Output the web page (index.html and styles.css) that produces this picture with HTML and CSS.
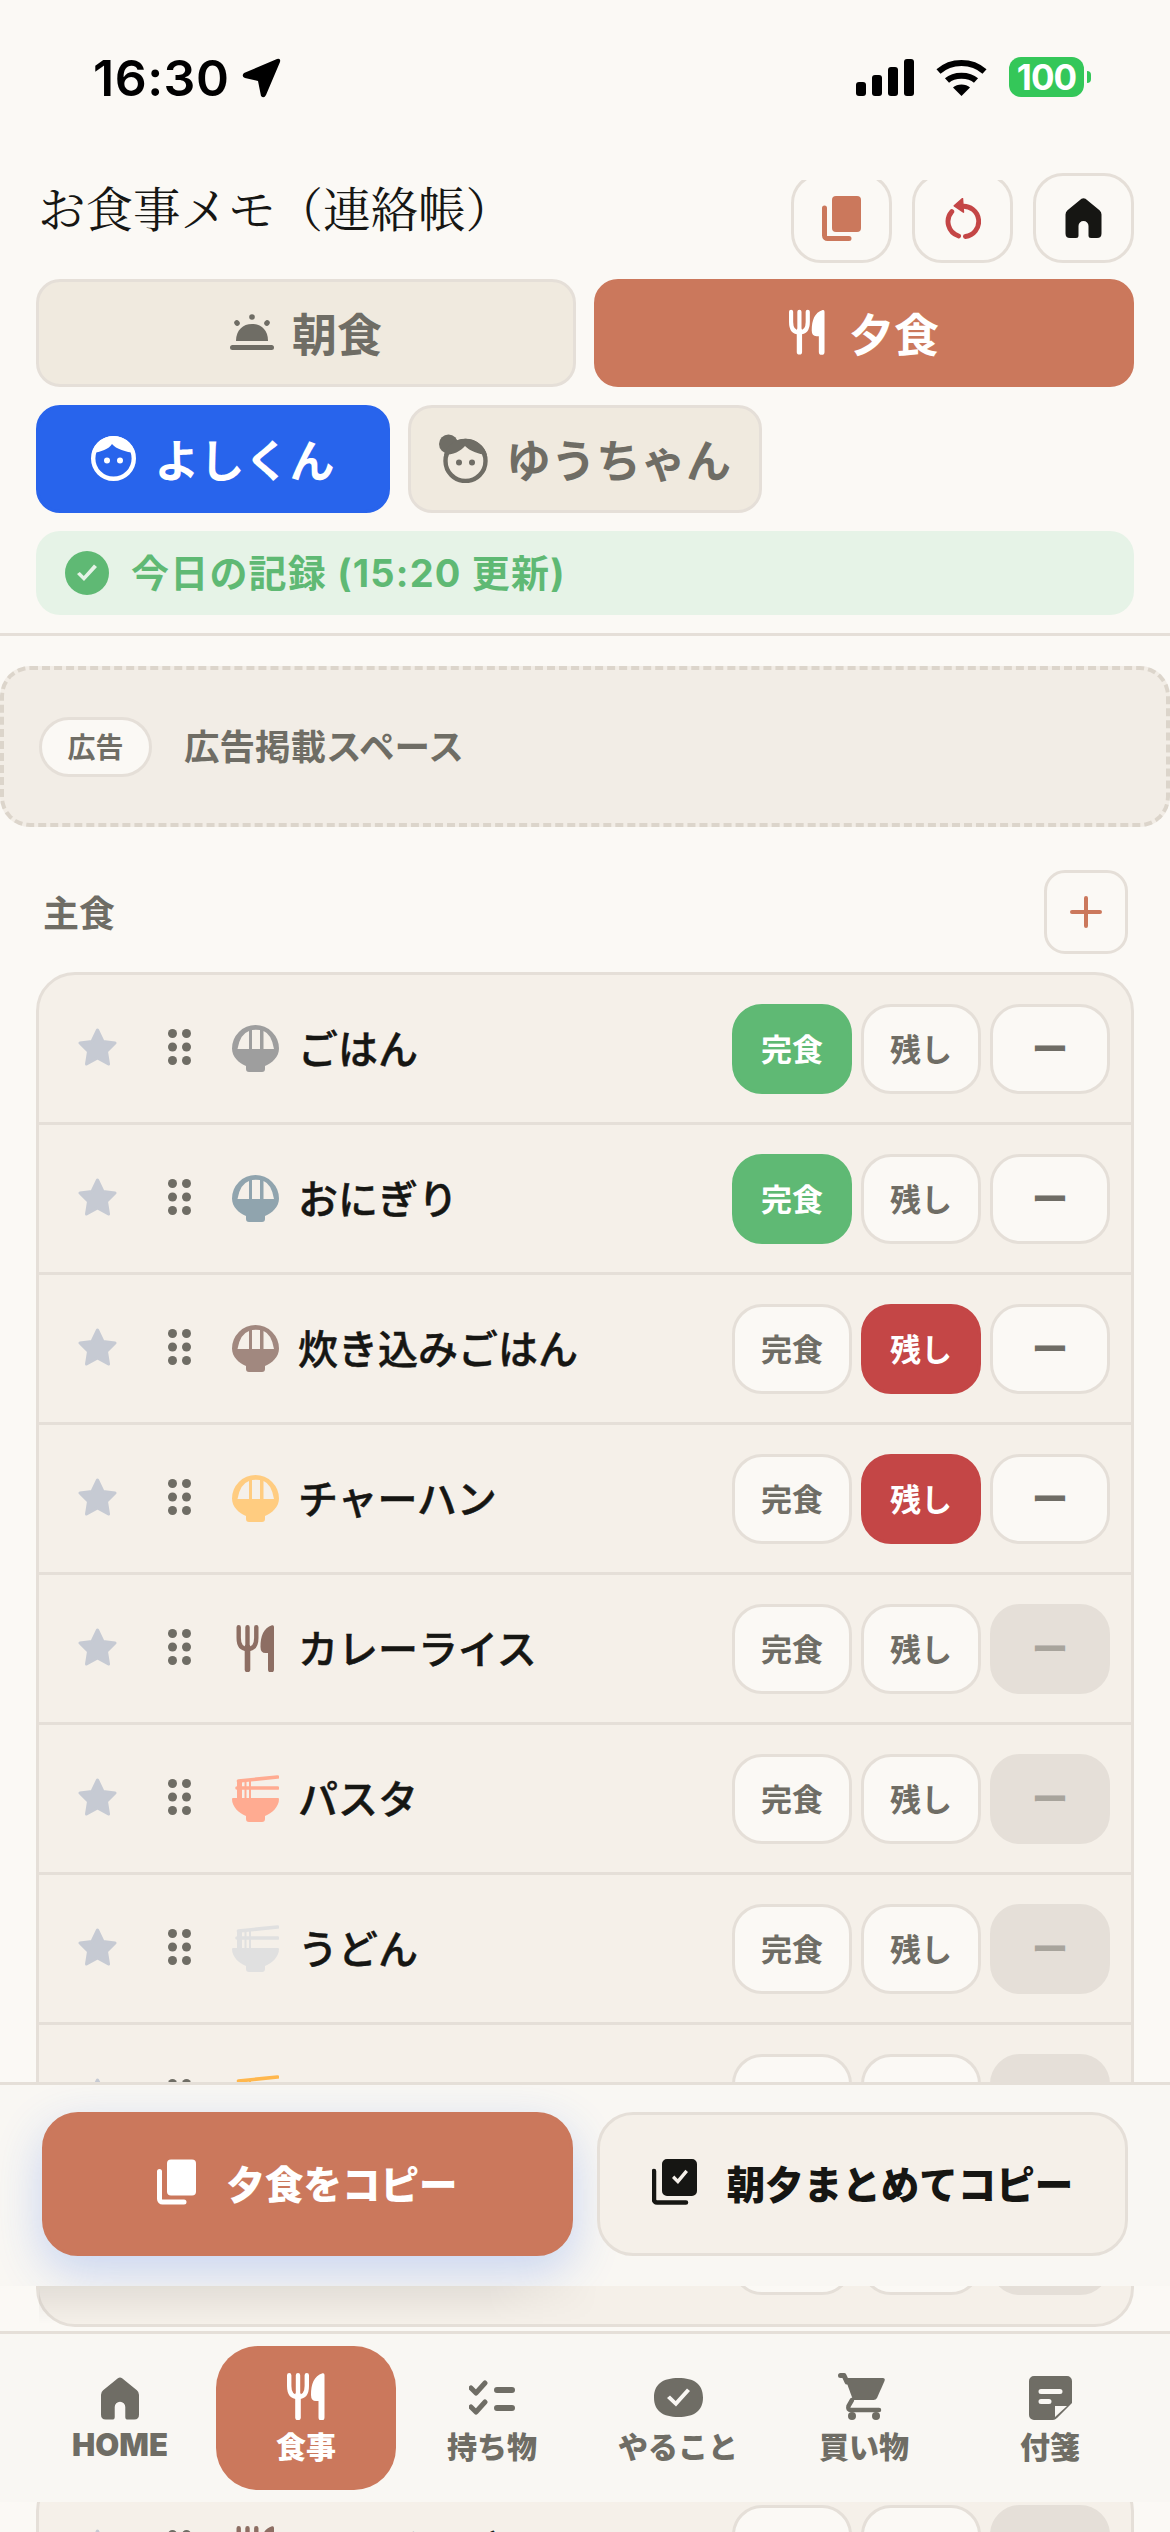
FILE: index.html
```html
<!DOCTYPE html>
<html lang="ja">
<head>
    <meta charset="UTF-8">
    <meta name="viewport" content="width=device-width, initial-scale=1.0">
    <title>お食事メモ</title>
    <link rel="stylesheet" href="styles.css">
</head>
<body>
    <svg class="sprite" xmlns="http://www.w3.org/2000/svg">
        <symbol id="ic-copy" viewBox="0 0 39 45">
            <rect x="10" y="0" width="29" height="36" rx="4" fill="currentColor"/>
            <path d="M2.5 12V39.5a3 3 0 0 0 3 3H27" fill="none" stroke="currentColor" stroke-width="5" stroke-linecap="round"/>
        </symbol>
        <symbol id="ic-copy-check" viewBox="0 0 45 46">
            <path fill-rule="evenodd" fill="currentColor" d="M15 0H40a5 5 0 0 1 5 5V32a5 5 0 0 1-5 5H15a5 5 0 0 1-5-5V5a5 5 0 0 1 5-5ZM20 19l6 6 10-12-2.6-2.2L25.700 20l-3.400-3.400Z"/>
            <path d="M2 12V40.500a3 3 0 0 0 3 3H34" fill="none" stroke="currentColor" stroke-width="4.500" stroke-linecap="round"/>
        </symbol>
        <symbol id="ic-reload" viewBox="0 0 38 42">
            <path d="M15 39A15.500 15.500 0 0 1 8 14" fill="none" stroke="currentColor" stroke-width="5" stroke-linecap="round"/>
            <path d="M22 39.500A15.500 15.500 0 0 0 18 8.500" fill="none" stroke="currentColor" stroke-width="5" stroke-linecap="round"/>
            <path d="M19 0.500 10.500 8 20 14.500Z" fill="currentColor" stroke="currentColor" stroke-width="1.500" stroke-linejoin="round"/>
        </symbol>
        <symbol id="ic-home" viewBox="0 0 36 40">
            <path fill="currentColor" d="M16 .8 2 12.300Q0 14 0 16.500V35.500Q0 40 4.500 40H10.500Q13 40 13 37.500V28a5 5 0 0 1 10 0V37.500Q23 40 25.500 40H31.500Q36 40 36 35.500V16.500Q36 14 34 12.300L20 .8Q18 -.5 16 .8Z"/>
        </symbol>
        <symbol id="ic-utensils" viewBox="0 0 38 47">
            <path d="M2.200 2.200V13Q2.200 24 11 24Q19.800 24 19.800 13V2.200M11 2.200V24" fill="none" stroke="currentColor" stroke-width="4.400" stroke-linecap="round"/>
            <path d="M11 22V44.500" fill="none" stroke="currentColor" stroke-width="5.600" stroke-linecap="round"/>
            <path fill="currentColor" d="M35.500 .3C27 3 24 11 24 22Q24 28 29 28H31.500V44.500a3 3 0 0 0 6 0V2Q37.500 -.2 35.500 .3Z"/>
        </symbol>
        <symbol id="ic-cloche" viewBox="0 0 44 36">
            <circle cx="22" cy="3" r="2.800" fill="currentColor"/>
            <ellipse cx="7" cy="9" rx="2.600" ry="3" transform="rotate(-40 7 9)" fill="currentColor"/>
            <ellipse cx="37" cy="9" rx="2.600" ry="3" transform="rotate(40 37 9)" fill="currentColor"/>
            <path fill="currentColor" d="M6 27C6 16 13 10 22 10S38 16 38 27Z"/>
            <rect x="0" y="31" width="44" height="5" rx="2.500" fill="currentColor"/>
        </symbol>
        <symbol id="ic-boy" viewBox="0 0 45 45">
            <circle cx="22.500" cy="22.500" r="20.300" fill="none" stroke="currentColor" stroke-width="4.400"/>
            <path fill="currentColor" d="M22.500 0A22.500 22.500 0 0 1 44 17C35 16 25 13 21 8C18 13 10 16 1 17A22.500 22.500 0 0 1 22.500 0Z"/>
            <circle cx="16" cy="24.500" r="3" fill="currentColor"/>
            <circle cx="29" cy="24.500" r="3" fill="currentColor"/>
        </symbol>
        <symbol id="ic-girl" viewBox="0 0 49 49">
            <circle cx="9.500" cy="10" r="9.500" fill="currentColor"/>
            <circle cx="26.500" cy="27" r="20" fill="none" stroke="currentColor" stroke-width="4.400"/>
            <path fill="currentColor" d="M26.500 4.800A22.200 22.200 0 0 1 48 21C39 20 31 17 26 12C22 17 14 21 5 21A22.200 22.200 0 0 1 26.500 4.800Z"/>
            <circle cx="20" cy="28.500" r="3" fill="currentColor"/>
            <circle cx="33" cy="28.500" r="3" fill="currentColor"/>
        </symbol>
        <symbol id="ic-star" viewBox="0 0 39 38">
            <path fill="currentColor" stroke="currentColor" stroke-width="3" stroke-linejoin="round" d="M19.500 2 25 13.500 37 15 28.500 23.500 30.500 36 19.500 30 8.500 36 10.500 23.500 2 15 14 13.500Z"/>
        </symbol>
        <symbol id="ic-drag" viewBox="0 0 23 36">
            <circle cx="4.500" cy="4.500" r="4.500" fill="currentColor"/>
            <circle cx="18.500" cy="4.500" r="4.500" fill="currentColor"/>
            <circle cx="4.500" cy="18" r="4.500" fill="currentColor"/>
            <circle cx="18.500" cy="18" r="4.500" fill="currentColor"/>
            <circle cx="4.500" cy="31.500" r="4.500" fill="currentColor"/>
            <circle cx="18.500" cy="31.500" r="4.500" fill="currentColor"/>
        </symbol>
        <symbol id="ic-bowl" viewBox="0 0 47 47">
            <path fill-rule="evenodd" fill="currentColor" d="M23.500 0A23.500 23.500 0 0 0 0 23.500C0 32 7 38 14 41V44a3 3 0 0 0 3 3H30a3 3 0 0 0 3-3V41C40 38 47 32 47 23.500A23.500 23.500 0 0 0 23.500 0ZM5.500 24H17V6Q8 9 5.500 24ZM20 24H28V5Q24 4.500 20 5ZM31.500 24H42Q39.500 9 31.500 6Z"/>
        </symbol>
        <symbol id="ic-noodle" viewBox="0 0 47 47">
            <path fill="currentColor" d="M1 23H46Q47 23 47 24C47 32 40 38 33 41V44a3 3 0 0 1-3 3H17a3 3 0 0 1-3-3V41C7 38 0 32 0 24Q0 23 1 23Z"/>
            <path d="M6.500 6 45.500 2M5 13H45.500" fill="none" stroke="currentColor" stroke-width="3.600" stroke-linecap="round"/>
            <path fill="currentColor" d="M5 6H10V24H5ZM12.500 6H14.500V24H12.500ZM17 6H19V24H17Z"/>
        </symbol>
        <symbol id="ic-checklist" viewBox="0 0 46 35">
            <path d="M2 8 7 13 16 3M2 27 7 32 16 22" fill="none" stroke="currentColor" stroke-width="5" stroke-linecap="round" stroke-linejoin="round"/>
            <path d="M28 10H43M28 28H43" fill="none" stroke="currentColor" stroke-width="6" stroke-linecap="round"/>
        </symbol>
        <symbol id="ic-todo" viewBox="0 0 49 39">
            <path fill-rule="evenodd" fill="currentColor" d="M24.500 0C40 0 49 6 49 19.500S40 39 24.500 39 0 33 0 19.500 9 0 24.500 0ZM13 20l9 8.500L36 13l-3-2.500L21.700 23l-5.700-5.500Z"/>
        </symbol>
        <symbol id="ic-cart" viewBox="0 0 47 47">
            <path d="M2.500 2.500H6L9 9" fill="none" stroke="currentColor" stroke-width="5" stroke-linecap="round" stroke-linejoin="round"/>
            <path fill="currentColor" d="M7 5H45Q47.500 5 46.500 8L39 25Q38 27 35.500 27H15Z"/>
            <path d="M14 27 10.500 33Q9.500 37 13 37H41" fill="none" stroke="currentColor" stroke-width="4.500" stroke-linecap="round"/>
            <circle cx="14" cy="43" r="4" fill="currentColor"/>
            <circle cx="38" cy="43" r="4" fill="currentColor"/>
        </symbol>
        <symbol id="ic-note" viewBox="0 0 43 44">
            <path fill-rule="evenodd" fill="currentColor" d="M5 0H38a5 5 0 0 1 5 5V27L28 42Q26 44 24 44H5a5 5 0 0 1-5-5V5A5 5 0 0 1 5 0ZM12 13a2.500 2.500 0 0 0 0 5H31a2.500 2.500 0 0 0 0-5ZM12 23a2.500 2.500 0 0 0 0 5H20a2.500 2.500 0 0 0 0-5ZM26 30V41L38 30Z"/>
        </symbol>
    </svg>

    <div class="status-bar">
        <div class="status-left">
            <span class="status-time">16:30</span>
            <svg class="status-arrow" viewBox="0 0 39 40"><path fill="currentColor" d="M2 15 35 1Q39 0 38 4L24 37Q22 41 19 38L16 23 3 20Q-1 18 2 15Z"/></svg>
        </div>
        <div class="status-right">
            <svg class="status-signal" viewBox="0 0 58 37">
                <rect x="0" y="23" width="10" height="14" rx="3" fill="currentColor"/>
                <rect x="16" y="16" width="10" height="21" rx="3" fill="currentColor"/>
                <rect x="32" y="8" width="10" height="29" rx="3" fill="currentColor"/>
                <rect x="48" y="0" width="10" height="37" rx="3" fill="currentColor"/>
            </svg>
            <svg class="status-wifi" viewBox="0 0 51 37">
                <path d="M2.500 12.500C15 1 36 1 48.500 12.500" fill="none" stroke="currentColor" stroke-width="6"/>
                <path d="M11 21.500C18 15 33 15 40 21.500" fill="none" stroke="currentColor" stroke-width="6"/>
                <path fill="currentColor" d="M25.500 37 17 28.500C21 24.500 30 24.500 34 28.500Z"/>
            </svg>
            <div class="status-battery">100</div>
            <div class="status-nub"></div>
        </div>
    </div>

    <header class="top">
        <div class="title-row">
            <h1 class="page-title">お食事メモ（連絡帳）</h1>
            <div class="tool-buttons">
                <button class="tool-btn tone-accent"><svg class="ic-copy"><use href="#ic-copy"/></svg></button>
                <button class="tool-btn tone-red"><svg class="ic-reload"><use href="#ic-reload"/></svg></button>
                <button class="tool-btn tool-btn-front"><svg class="ic-home"><use href="#ic-home"/></svg></button>
            </div>
        </div>
        <div class="meal-tabs">
            <button class="tab"><svg class="ic-cloche"><use href="#ic-cloche"/></svg>朝食</button>
            <button class="tab tab-meal-on"><svg class="ic-utensils"><use href="#ic-utensils"/></svg>夕食</button>
        </div>
        <div class="person-tabs">
            <button class="tab tab-person tab-person-on"><svg class="ic-boy"><use href="#ic-boy"/></svg>よしくん</button>
            <button class="tab tab-person"><svg class="ic-girl"><use href="#ic-girl"/></svg>ゆうちゃん</button>
        </div>
        <div class="record-bar">
            <svg class="ic-record" viewBox="0 0 44 44"><path fill-rule="evenodd" fill="currentColor" d="M22 0a22 22 0 1 1 0 44a22 22 0 0 1 0-44ZM12 23l7 7 13-14-3-2.500L18.800 25l-4-4Z"/></svg>
            <span class="record-text">今日の記録 (15:20 更新)</span>
        </div>
    </header>

    <div class="ad-space">
        <span class="ad-badge">広告</span>
        <span class="ad-text">広告掲載スペース</span>
    </div>

    <section class="food-section">
        <div class="section-head">
            <h2 class="section-title">主食</h2>
            <button class="add-btn"><svg viewBox="0 0 32 32"><path d="M16 2V30M2 16H30" fill="none" stroke="currentColor" stroke-width="4" stroke-linecap="round"/></svg></button>
        </div>
        <div class="food-list">
            <div class="food-row">
                <svg class="star"><use href="#ic-star"/></svg>
                <svg class="drag"><use href="#ic-drag"/></svg>
                <svg class="food-icon tone-rice"><use href="#ic-bowl"/></svg>
                <span class="food-name">ごはん</span>
                <div class="choices">
                    <button class="choice choice-done">完食</button>
                    <button class="choice">残し</button>
                    <button class="choice choice-dash">ー</button>
                </div>
            </div>
            <div class="food-row">
                <svg class="star"><use href="#ic-star"/></svg>
                <svg class="drag"><use href="#ic-drag"/></svg>
                <svg class="food-icon tone-onigiri"><use href="#ic-bowl"/></svg>
                <span class="food-name">おにぎり</span>
                <div class="choices">
                    <button class="choice choice-done">完食</button>
                    <button class="choice">残し</button>
                    <button class="choice choice-dash">ー</button>
                </div>
            </div>
            <div class="food-row">
                <svg class="star"><use href="#ic-star"/></svg>
                <svg class="drag"><use href="#ic-drag"/></svg>
                <svg class="food-icon tone-takikomi"><use href="#ic-bowl"/></svg>
                <span class="food-name">炊き込みごはん</span>
                <div class="choices">
                    <button class="choice">完食</button>
                    <button class="choice choice-left">残し</button>
                    <button class="choice choice-dash">ー</button>
                </div>
            </div>
            <div class="food-row">
                <svg class="star"><use href="#ic-star"/></svg>
                <svg class="drag"><use href="#ic-drag"/></svg>
                <svg class="food-icon tone-fried"><use href="#ic-bowl"/></svg>
                <span class="food-name">チャーハン</span>
                <div class="choices">
                    <button class="choice">完食</button>
                    <button class="choice choice-left">残し</button>
                    <button class="choice choice-dash">ー</button>
                </div>
            </div>
            <div class="food-row">
                <svg class="star"><use href="#ic-star"/></svg>
                <svg class="drag"><use href="#ic-drag"/></svg>
                <svg class="food-icon tone-curry"><use href="#ic-utensils"/></svg>
                <span class="food-name">カレーライス</span>
                <div class="choices">
                    <button class="choice">完食</button>
                    <button class="choice">残し</button>
                    <button class="choice choice-dash choice-none">ー</button>
                </div>
            </div>
            <div class="food-row">
                <svg class="star"><use href="#ic-star"/></svg>
                <svg class="drag"><use href="#ic-drag"/></svg>
                <svg class="food-icon tone-pasta"><use href="#ic-noodle"/></svg>
                <span class="food-name">パスタ</span>
                <div class="choices">
                    <button class="choice">完食</button>
                    <button class="choice">残し</button>
                    <button class="choice choice-dash choice-none">ー</button>
                </div>
            </div>
            <div class="food-row">
                <svg class="star"><use href="#ic-star"/></svg>
                <svg class="drag"><use href="#ic-drag"/></svg>
                <svg class="food-icon tone-udon"><use href="#ic-noodle"/></svg>
                <span class="food-name">うどん</span>
                <div class="choices">
                    <button class="choice">完食</button>
                    <button class="choice">残し</button>
                    <button class="choice choice-dash choice-none">ー</button>
                </div>
            </div>
            <div class="food-row">
                <svg class="star"><use href="#ic-star"/></svg>
                <svg class="drag"><use href="#ic-drag"/></svg>
                <svg class="food-icon tone-ramen"><use href="#ic-noodle"/></svg>
                <span class="food-name">ラーメン</span>
                <div class="choices">
                    <button class="choice">完食</button>
                    <button class="choice">残し</button>
                    <button class="choice choice-dash choice-none">ー</button>
                </div>
            </div>
            <div class="food-row">
                <svg class="star"><use href="#ic-star"/></svg>
                <svg class="drag"><use href="#ic-drag"/></svg>
                <svg class="food-icon tone-curry"><use href="#ic-utensils"/></svg>
                <span class="food-name">パン</span>
                <div class="choices">
                    <button class="choice">完食</button>
                    <button class="choice">残し</button>
                    <button class="choice choice-dash choice-none">ー</button>
                </div>
            </div>
        </div>
    </section>

    <section class="food-section">
        <div class="section-head">
            <h2 class="section-title">主菜</h2>
            <button class="add-btn"><svg viewBox="0 0 32 32"><path d="M16 2V30M2 16H30" fill="none" stroke="currentColor" stroke-width="4" stroke-linecap="round"/></svg></button>
        </div>
        <div class="food-list">
            <div class="food-row">
                <svg class="star"><use href="#ic-star"/></svg>
                <svg class="drag"><use href="#ic-drag"/></svg>
                <svg class="food-icon tone-curry"><use href="#ic-utensils"/></svg>
                <span class="food-name">ハンバーグ</span>
                <div class="choices">
                    <button class="choice">完食</button>
                    <button class="choice">残し</button>
                    <button class="choice choice-dash choice-none">ー</button>
                </div>
            </div>
        </div>
    </section>

    <div class="copy-shade"></div>
    <div class="copy-bar">
        <button class="copy-btn copy-btn-main"><svg class="ic-copy-lg"><use href="#ic-copy"/></svg>夕食をコピー</button>
        <button class="copy-btn"><svg class="ic-copy-check"><use href="#ic-copy-check"/></svg>朝夕まとめてコピー</button>
    </div>

    <nav class="bottom-nav">
        <a class="nav-item"><svg class="nav-home"><use href="#ic-home"/></svg><span class="nav-latin">HOME</span></a>
        <a class="nav-item nav-item-on"><svg class="nav-meal"><use href="#ic-utensils"/></svg>食事</a>
        <a class="nav-item"><svg class="nav-list"><use href="#ic-checklist"/></svg>持ち物</a>
        <a class="nav-item"><svg class="nav-todo"><use href="#ic-todo"/></svg>やること</a>
        <a class="nav-item"><svg class="nav-cart"><use href="#ic-cart"/></svg>買い物</a>
        <a class="nav-item"><svg class="nav-note"><use href="#ic-note"/></svg>付箋</a>
    </nav>
</body>
</html>
```

FILE: styles.css
```css
* {
    box-sizing: border-box;
}
html, body {
    margin: 0;
    padding: 0;
}
body {
    position: relative;
    width: 1170px;
    height: 2532px;
    overflow: hidden;
    background-color: #fbf9f5;
    color: #161613;
    font-family: "Noto Sans CJK JP", "Noto Sans", sans-serif;
}
button {
    font-family: inherit;
    padding: 0;
    cursor: pointer;
}
svg {
    display: block;
    flex: none;
}
.sprite {
    position: absolute;
    width: 0;
    height: 0;
}

/* status bar sits over the scrolled header */
.status-bar {
    position: absolute;
    top: 0;
    left: 0;
    z-index: 5;
    width: 100%;
    height: 180px;
    background-color: #fbf9f5;
    color: #000;
}
.status-left {
    position: absolute;
    top: 48px;
    left: 93px;
    display: flex;
    align-items: center;
    gap: 13px;
}
.status-time {
    font-family: Inter, sans-serif;
    font-size: 50px;
    font-weight: 600;
    line-height: 60px;
    letter-spacing: 0.5px;
}
.status-arrow {
    width: 39px;
    height: 40px;
}
.status-right {
    position: absolute;
    top: 57px;
    left: 856px;
    display: flex;
    align-items: center;
}
.status-signal {
    width: 58px;
    height: 37px;
}
.status-wifi {
    width: 51px;
    height: 37px;
    margin-left: 22px;
}
.status-battery {
    width: 75px;
    height: 40px;
    margin-left: 22px;
    border-radius: 12px;
    background-color: #34c759;
    color: #fff;
    font-family: Inter, sans-serif;
    font-size: 35px;
    font-weight: 700;
    line-height: 40px;
    text-align: center;
    letter-spacing: -1px;
}
.status-nub {
    width: 4px;
    height: 12px;
    margin-left: 3px;
    border-radius: 0 4px 4px 0;
    background-color: #34c759;
}

/* header */
.top {
    padding: 173px 36px 18px;
    border-bottom: 3px solid #e5dfd8;
}
.title-row {
    display: flex;
    align-items: center;
    justify-content: space-between;
    height: 90px;
}
.page-title {
    margin: 0 0 23px 2px;
    font-family: "Noto Serif CJK JP", "Liberation Serif", serif;
    font-size: 47.5px;
    font-weight: 400;
    line-height: 60px;
}
.tool-buttons {
    display: flex;
    gap: 20px;
}
.tool-btn {
    position: relative;
    display: flex;
    align-items: center;
    justify-content: center;
    width: 101px;
    height: 90px;
    border: 3px solid #e5dfd8;
    border-radius: 30px;
    background-color: #fbf9f5;
    color: #161613;
}
.tool-btn-front {
    z-index: 6;
}
.tone-accent { color: #cb785c; }
.tone-red { color: #c44646; }
.ic-copy {
    width: 39px;
    height: 45px;
}
.ic-reload {
    width: 37px;
    height: 41px;
}
.ic-home {
    width: 37px;
    height: 40px;
}
.meal-tabs {
    display: flex;
    gap: 18px;
    margin-top: 16px;
}
.tab {
    display: flex;
    align-items: center;
    justify-content: center;
    gap: 18px;
    flex: 1;
    height: 108px;
    padding-bottom: 2px;
    border: 3px solid #e5dfd8;
    border-radius: 24px;
    background-color: #f0eadf;
    color: #6f6d65;
    font-size: 45px;
    font-weight: 700;
}
.tab-meal-on {
    border-color: #cb785c;
    background-color: #cb785c;
    color: #fff;
    gap: 24px;
}
.ic-cloche {
    width: 44px;
    height: 36px;
}
.ic-utensils {
    width: 36px;
    height: 46px;
}
.person-tabs {
    display: flex;
    gap: 18px;
    margin-top: 18px;
}
.tab-person {
    flex: none;
    width: 354px;
}
.tab-person-on {
    border-color: #2864ec;
    background-color: #2864ec;
    color: #fff;
}
.ic-boy {
    width: 45px;
    height: 45px;
}
.ic-girl {
    width: 49px;
    height: 49px;
}
.record-bar {
    display: flex;
    align-items: center;
    gap: 22px;
    height: 84px;
    margin-top: 18px;
    padding-left: 29px;
    border-radius: 24px;
    background-color: #e6f3e7;
    color: #5fb974;
}
.record-text {
    margin-bottom: 5px;
    font-family: Inter, "Noto Sans CJK JP", sans-serif;
    font-size: 38px;
    font-weight: 700;
    letter-spacing: 1.2px;
}
.ic-record {
    width: 44px;
    height: 44px;
}

/* ad placeholder */
.ad-space {
    display: flex;
    align-items: center;
    gap: 32px;
    height: 161px;
    margin-top: 30px;
    padding-left: 35px;
    border: 4px dashed #dcd5cb;
    border-radius: 30px;
    background-color: #f2ede6;
    color: #6f6d65;
    font-weight: 700;
}
.ad-badge {
    width: 113px;
    height: 60px;
    border: 3px solid #e5dfd8;
    border-radius: 30px;
    background-color: #fbf9f5;
    font-size: 28px;
    line-height: 52px;
    text-align: center;
}
.ad-text {
    margin-bottom: 5px;
    font-size: 35.500px;
}

/* food lists */
.food-section {
    margin: 43px 36px 0;
}
.section-head {
    display: flex;
    align-items: center;
    justify-content: space-between;
    height: 84px;
    margin-bottom: 18px;
    padding: 0 6px 0 7px;
}
.section-title {
    margin: 0 0 3px;
    color: #6f6d65;
    font-size: 36px;
    font-weight: 700;
}
.add-btn {
    display: flex;
    align-items: center;
    justify-content: center;
    width: 84px;
    height: 84px;
    border: 3px solid #e5dfd8;
    border-radius: 21px;
    background-color: #fbf9f5;
    color: #cb785c;
}
.add-btn svg {
    width: 32px;
    height: 32px;
}
.food-list {
    border: 3px solid #e5dfd8;
    border-radius: 39px;
    background-color: #f5f0e9;
    overflow: hidden;
}
.food-row {
    display: flex;
    align-items: center;
    height: 150px;
    padding: 0 21px 0 39px;
    border-bottom: 3px solid #e5dfd8;
}
.food-row:last-child {
    height: 149px;
    border-bottom: none;
}
.star {
    width: 39px;
    height: 38px;
    margin-bottom: 3px;
    color: #c6cad3;
}
.drag {
    width: 23px;
    height: 36px;
    margin-left: 51px;
    margin-bottom: 3px;
    color: #6f6d65;
}
.food-icon {
    width: 47px;
    height: 47px;
    margin-left: 41px;
    margin-bottom: 1px;
}
.tone-rice { color: #9e9e9e; }
.tone-onigiri { color: #90a4ae; }
.tone-takikomi { color: #a1887f; }
.tone-fried { color: #ffcc80; }
.tone-curry { color: #8d6e63; }
.tone-pasta { color: #ffab91; }
.tone-udon { color: #e0e0e0; }
.tone-ramen { color: #ffb74d; }
.food-name {
    margin: 0 0 4px 19px;
    font-size: 40px;
    font-weight: 500;
    -webkit-text-stroke: 0.5px #161613;
}
.choices {
    display: flex;
    gap: 9px;
    margin-left: auto;
}
.choice {
    width: 120px;
    height: 90px;
    padding-bottom: 3px;
    border: 3px solid #e5dfd8;
    border-radius: 30px;
    background-color: #fbf9f5;
    color: #6f6d65;
    font-size: 31px;
    font-weight: 700;
}
.choice-dash {
    font-size: 37px;
}
.choice-done {
    border-color: #5fb974;
    background-color: #5fb974;
    color: #fff;
}
.choice-left {
    border-color: #c44646;
    background-color: #c44646;
    color: #fff;
}
.choice-none {
    border-color: #e5dfd8;
    background-color: #e5dfd8;
    color: #a8a49c;
}

/* fixed copy actions */
.copy-bar {
    position: absolute;
    top: 2082px;
    left: 0;
    z-index: 3;
    display: flex;
    gap: 24px;
    width: 100%;
    height: 204px;
    padding: 27px 42px 0;
    overflow: hidden;
    border-top: 3px solid #e5dfd8;
    background-color: #f9f7f3;
}
.copy-btn {
    display: flex;
    align-items: center;
    justify-content: center;
    gap: 30px;
    flex: 1;
    height: 144px;
    padding-bottom: 4px;
    border: 3px solid #e5dfd8;
    border-radius: 36px;
    background-color: #f5f0e9;
    color: #161613;
    font-size: 38.5px;
    font-weight: 900;
}
.copy-btn-main {
    border-color: #cb785c;
    background-color: #cb785c;
    color: #fff;
    box-shadow: 0 16px 48px rgba(40, 100, 236, 0.24);
}
.ic-copy-lg {
    width: 39px;
    height: 46px;
}
.ic-copy-check {
    width: 45px;
    height: 46px;
}
.copy-shade {
    position: absolute;
    top: 2286px;
    left: 39px;
    z-index: 2;
    width: 560px;
    height: 38px;
    background: linear-gradient(rgba(0, 0, 0, 0.07), rgba(0, 0, 0, 0));
    -webkit-mask-image: linear-gradient(90deg, #000 80%, transparent);
    mask-image: linear-gradient(90deg, #000 80%, transparent);
}

/* bottom nav */
.bottom-nav {
    position: absolute;
    top: 2331px;
    left: 0;
    z-index: 4;
    display: flex;
    gap: 6px;
    width: 100%;
    height: 171px;
    padding: 12px 30px 0;
    border-top: 3px solid #e5dfd8;
    background-color: #f9f7f3;
}
.nav-item {
    display: flex;
    flex-direction: column;
    align-items: center;
    justify-content: flex-end;
    gap: 7px;
    width: 180px;
    height: 144px;
    padding-bottom: 27px;
    border-radius: 42px;
    color: #6f6d65;
    font-size: 30px;
    font-weight: 900;
    line-height: 36px;
}
.nav-latin {
    font-family: Inter, sans-serif;
    font-size: 31px;
}
.nav-item-on {
    background-color: #cb785c;
    color: #fff;
}
.nav-home { width: 38px; height: 43px; }
.nav-meal { width: 38px; height: 47px; }
.nav-list { width: 46px; height: 35px; margin-bottom: 5px; }
.nav-todo { width: 49px; height: 39px; margin-bottom: 3px; }
.nav-cart { width: 47px; height: 47px; margin-right: 6px; }
.nav-note { width: 43px; height: 44px; }
```
